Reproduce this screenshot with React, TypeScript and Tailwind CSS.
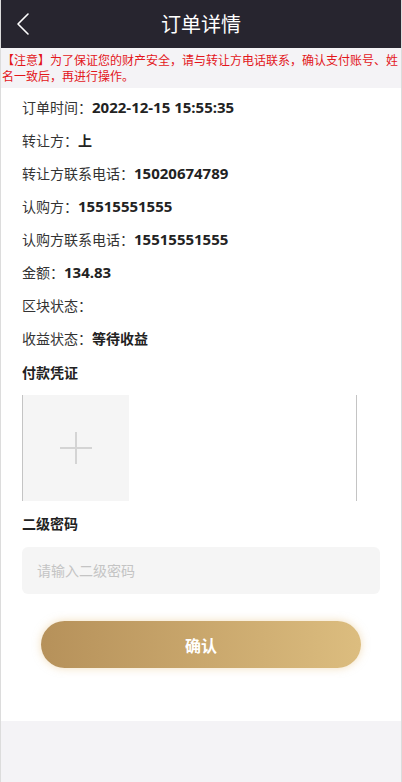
import React, { useState } from 'react';

const rows: { label: string; value: string; cjk?: boolean }[] = [
  { label: '订单时间：', value: '2022-12-15 15:55:35' },
  { label: '转让方：', value: '上', cjk: true },
  { label: '转让方联系电话：', value: '15020674789' },
  { label: '认购方：', value: '15515551555' },
  { label: '认购方联系电话：', value: '15515551555' },
  { label: '金额：', value: '134.83' },
  { label: '区块状态：', value: '' },
  { label: '收益状态：', value: '等待收益', cjk: true },
];

export default function App() {
  const [pwd, setPwd] = useState('');

  return (
    <div
      className="min-h-[782px] bg-[#f4f3f6] border-x border-[#dcdcdc] text-[#333]"
      style={{ fontFamily: '"Noto Sans CJK SC", "Liberation Sans", sans-serif' }}
    >
      {/* Header */}
      <div className="relative h-[48px] bg-[#27252f] flex items-center justify-center">
        <button className="absolute left-[14px] top-[12px] text-white">
          <svg width="18" height="24" viewBox="0 0 18 24" fill="none">
            <path d="M13 2 L3 12 L13 22" stroke="#ffffff" strokeWidth="1.6" strokeLinecap="round" strokeLinejoin="round" />
          </svg>
        </button>
        <h1 className="text-white text-[20px] leading-none">订单详情</h1>
      </div>

      {/* Notice */}
      <p className="px-[1px] pt-[4px] pb-[4px] text-[12px] leading-[16px] text-[#e3161b]">
        【注意】为了保证您的财产安全，请与转让方电话联系，确认支付账号、姓名一致后，再进行操作。
      </p>

      {/* Card */}
      <div className="bg-white px-[21px] pt-[3px] pb-[53px]">
        <div className="flex flex-col">
          {rows.map((r) => (
            <div key={r.label} className="h-[33px] flex items-center text-[14px]">
              <span className="text-[#333]">{r.label}</span>
              {r.cjk ? (
                <span className="font-bold text-[14px] text-[#222]">{r.value}</span>
              ) : (
                <span
                  className="font-bold text-[15px] text-[#222]"
                  style={{ fontFamily: '"Open Sans", "Noto Sans CJK SC", sans-serif' }}
                >
                  {r.value}
                </span>
              )}
            </div>
          ))}
        </div>

        <div className="h-[34px] flex items-center text-[14px] font-bold text-[#222]">付款凭证</div>

        <div className="mt-[6px] w-[335px] h-[106px] border-x border-[#c4c4c4] flex">
          <div className="w-[106px] h-[106px] bg-[#f5f5f5] flex items-center justify-center">
            <svg width="34" height="34" viewBox="0 0 34 34">
              <path d="M17 1 V33 M1 17 H33" stroke="#d4d4d4" strokeWidth="2" />
            </svg>
          </div>
        </div>

        <div className="mt-[10px] h-[24px] flex items-center text-[14px] font-bold text-[#222]">二级密码</div>

        <div className="mt-[12px] h-[47px] bg-[#f5f5f5] rounded-[6px] flex items-center px-[15px]">
          <input
            type="password"
            value={pwd}
            onChange={(e) => setPwd(e.target.value)}
            placeholder="请输入二级密码"
            className="w-full bg-transparent outline-none text-[14px] placeholder:text-[#c4c4c4]"
          />
        </div>

        <button className="mt-[27px] mx-auto block w-[320px] h-[47px] rounded-full bg-gradient-to-r from-[#b6915a] to-[#dcbd7f] text-white text-[16px] font-bold shadow-[0_0_8px_rgba(230,190,120,0.5)]">
          确认
        </button>
      </div>
    </div>
  );
}
